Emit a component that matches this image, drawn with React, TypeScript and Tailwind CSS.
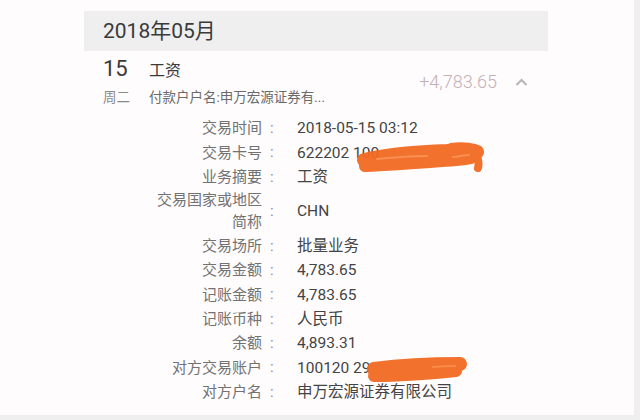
import React from "react";

const font = { fontFamily: 'Roboto, "Noto Sans CJK SC", sans-serif' };

type Row = { label: React.ReactNode; value: React.ReactNode; two?: boolean; scribble?: "card" | "acct" };

function CardScribble() {
  return (
    <svg className="absolute left-[60px] top-[0px]" width="130" height="34" viewBox="0 0 130 34">
      <g stroke="#f26a21" strokeLinecap="round" strokeLinejoin="round" fill="none" opacity="0.95">
        <path d="M7 19 C30 14 60 11 90 10 C105 9 114 9 120 11" strokeWidth="14" />
        <path d="M8 25 C35 24 60 22 85 20 C100 19 108 18 114 17" strokeWidth="12" />
        <path d="M112 9 C119 12 123 18 121 27" strokeWidth="8" />
        <path d="M94 5 C102 4 110 4 118 6" strokeWidth="6" />
      </g>
      <g stroke="#ffa970" strokeLinecap="round" fill="none" opacity="0.55">
        <path d="M20 18 C40 16 55 15 70 15" strokeWidth="2" />
        <path d="M96 16 C104 15 108 14 112 14" strokeWidth="2" />
      </g>
    </svg>
  );
}

function AcctScribble() {
  return (
    <svg className="absolute left-[70px] top-[-1px]" width="102" height="30" viewBox="0 0 102 30">
      <g stroke="#f26a21" strokeLinecap="round" strokeLinejoin="round" fill="none" opacity="0.95">
        <path d="M7 14 C30 11 60 9 93 9" strokeWidth="14" />
        <path d="M7 21 C30 21 60 19 89 16" strokeWidth="12" />
      </g>
      <g stroke="#ffa667" strokeLinecap="round" fill="none" opacity="0.5">
        <path d="M66 12 C76 11 82 11 88 11" strokeWidth="2" />
      </g>
    </svg>
  );
}

const rows: Row[] = [
  { label: "交易时间", value: "2018-05-15 03:12" },
  { label: "交易卡号", value: "622202 100", scribble: "card" },
  { label: "业务摘要", value: "工资" },
  {
    label: (
      <>
        交易国家或地区
        <br />
        简称
      </>
    ),
    value: "CHN",
    two: true,
  },
  { label: "交易场所", value: "批量业务" },
  { label: "交易金额", value: "4,783.65" },
  { label: "记账金额", value: "4,783.65" },
  { label: "记账币种", value: "人民币" },
  { label: "余额", value: "4,893.31" },
  { label: "对方交易账户", value: "100120 29", scribble: "acct" },
  { label: "对方户名", value: "申万宏源证券有限公司" },
];

export default function App() {
  return (
    <div className="w-[640px] h-[420px] bg-[#efefef] overflow-hidden" style={font}>
      <div className="w-[634px] h-[415px] bg-[#fefcfd] pt-[11px] pl-[84px]">
        <div className="w-[464px]">
          <div className="h-[40px] bg-[#efefef] pl-[19px] flex items-center text-[21px] text-[#3a3a3a] pt-[2px]">
            2018年05月
          </div>
          <div className="flex items-center pl-[19px] pr-[20px] pt-[5px] pb-[9px]">
            <div className="w-[46px] flex flex-col">
              <div className="text-[22px] leading-[26px] text-[#3a3a3a]">15</div>
              <div className="text-[13.5px] leading-[20px] mt-[5px] text-[#8a8a8a]">周二</div>
            </div>
            <div className="flex flex-col">
              <div className="text-[16px] leading-[26px] pt-[2px] text-[#3a3a3a]">工资</div>
              <div className="text-[13.5px] leading-[20px] mt-[3px] text-[#6a6a6a]">付款户户名:申万宏源证券有...</div>
            </div>
            <div className="ml-auto flex items-center gap-[18px]">
              <span className="text-[18px] font-light text-[#c4b0b6]">+4,783.65</span>
              <svg width="13" height="8" viewBox="0 0 13 8">
                <polyline points="1.5,7 6.5,2 11.5,7" fill="none" stroke="#b5b5b5" strokeWidth="2" />
              </svg>
            </div>
          </div>
          <div className="flex flex-col pl-[68px]">
            {rows.map((r, i) => (
              <div key={i} className={`flex items-center ${r.two ? "h-[44.4px]" : "h-[24.4px]"}`}>
                <div className={`w-[110px] text-right text-[15px] text-[#727272] ${r.two ? "leading-[22px]" : "leading-[24px]"}`}>
                  {r.label}
                </div>
                <div className="w-[35px] pl-[8px] text-[15px] text-[#8a8a8a]">:</div>
                <div className="relative text-[15.5px] text-[#444] leading-[24px] whitespace-nowrap">
                  {r.value}
                  {r.scribble === "card" && <CardScribble />}
                  {r.scribble === "acct" && <AcctScribble />}
                </div>
              </div>
            ))}
          </div>
        </div>
      </div>
    </div>
  );
}
